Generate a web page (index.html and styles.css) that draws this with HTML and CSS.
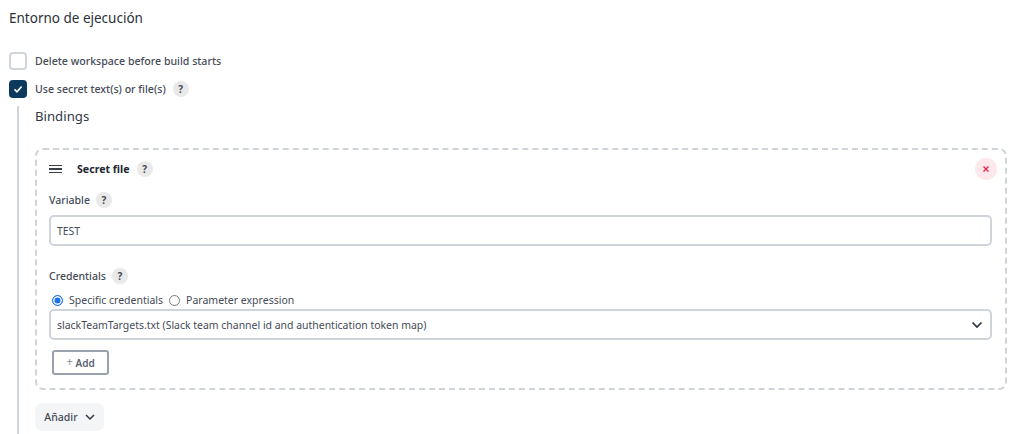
FILE: index.html
```html
<!DOCTYPE html>
<html lang="en">
<head>
  <meta charset="UTF-8">
  <meta name="viewport" content="width=device-width, initial-scale=1.0">
  <link rel="stylesheet" href="styles.css">
  <title>Entorno de ejecución</title>
</head>
<body>
  <h2 class="section-title">Entorno de ejecución</h2>

  <div class="check-row">
    <span class="checkbox"></span>
    <span class="check-label">Delete workspace before build starts</span>
  </div>
  <div class="check-row check-row-second">
    <span class="checkbox checked">
      <svg width="10" height="10" viewBox="0 0 10 10"><path d="M1.5 5.4 L4 7.8 L8.6 2.4" fill="none" stroke="#fff" stroke-width="1.6"/></svg>
    </span>
    <span class="check-label">Use secret text(s) or file(s)</span>
    <span class="help">?</span>
  </div>

  <div class="nested">
    <h3 class="bindings-title">Bindings</h3>

    <div class="card">
      <div class="card-head">
        <span class="drag-handle"><i></i><i></i><i></i></span>
        <span class="card-title">Secret file</span>
        <span class="help">?</span>
        <span class="close-btn">
          <svg width="8" height="8" viewBox="0 0 8 8"><path d="M1.5 1.5 L6.5 6.5 M6.5 1.5 L1.5 6.5" stroke="#e6214a" stroke-width="1.3"/></svg>
        </span>
      </div>

      <div class="field-label">Variable <span class="help">?</span></div>
      <div class="text-input">TEST</div>

      <div class="field-label field-label-creds">Credentials <span class="help">?</span></div>
      <div class="radio-row">
        <span class="radio selected"></span>
        <span class="radio-label">Specific credentials</span>
        <span class="radio"></span>
        <span class="radio-label">Parameter expression</span>
      </div>
      <div class="text-input select-input">
        slackTeamTargets.txt (Slack team channel id and authentication token map)
        <svg class="chevron" width="12" height="8" viewBox="0 0 12 8"><path d="M1.5 1.5 L6 6 L10.5 1.5" fill="none" stroke="#2f3542" stroke-width="1.7"/></svg>
      </div>
      <button class="add-btn"><span class="plus">+</span> Add</button>
    </div>

    <button class="more-btn">Añadir
      <svg width="10" height="7" viewBox="0 0 10 7"><path d="M1 1 L5 5 L9 1" fill="none" stroke="#2f3542" stroke-width="1.5"/></svg>
    </button>
  </div>
</body>
</html>
```

FILE: styles.css
```css
html, body {
  height: 434px;
  overflow: hidden;
}

body {
  margin: 0;
  padding: 9px 0 0 9px;
  box-sizing: border-box;
  font-family: 'Noto Sans', sans-serif;
  font-size: 10.6px;
  color: #333a47;
  background-color: #fff;
}

.section-title {
  margin: 0;
  font-size: 13.5px;
  line-height: 18px;
  font-weight: 400;
  color: #2b303a;
}

.check-row {
  display: flex;
  align-items: center;
  height: 18px;
  margin-top: 25px;
}

.check-row-second {
  margin-top: 10px;
}

.checkbox {
  display: flex;
  align-items: center;
  justify-content: center;
  width: 18px;
  height: 18px;
  box-sizing: border-box;
  border: 2px solid #cfd5db;
  border-radius: 4px;
  margin-right: 8px;
}

.checkbox.checked {
  background-color: #0b3a5c;
  border-color: #0b3a5c;
}

.check-label {
  font-weight: 500;
  color: #454b57;
}

.help {
  display: inline-flex;
  align-items: center;
  justify-content: center;
  width: 16px;
  height: 16px;
  margin-left: 6px;
  border-radius: 50%;
  background-color: #e9e9ea;
  font-size: 10px;
  font-weight: 700;
  color: #444a55;
}

.check-row .help {
  margin-left: 7px;
}

.nested {
  margin: 8px 0 0 8px;
  padding-left: 16px;
  border-left: 2px solid #cfd4da;
  height: 340px;
}

.bindings-title {
  margin: 0;
  padding-top: 1px;
  font-size: 13.2px;
  line-height: 18px;
  font-weight: 400;
  color: #333a47;
}

.card {
  margin-top: 23px;
  width: 972px;
  height: 242px;
  box-sizing: border-box;
  padding: 8px 13px 0 12px;
  border: 2px dashed #cfd4da;
  border-radius: 8px;
}

.card-head {
  display: flex;
  align-items: center;
  height: 22px;
}

.drag-handle {
  display: flex;
  flex-direction: column;
  gap: 2px;
  width: 13px;
  margin-right: 15px;
}

.drag-handle i {
  display: block;
  height: 1.5px;
  background-color: #3a404c;
}

.card-title {
  font-weight: 700;
  color: #23272f;
}

.card-head .help {
  margin-left: 7px;
}

.close-btn {
  display: flex;
  align-items: center;
  justify-content: center;
  width: 22px;
  height: 22px;
  margin-left: auto;
  margin-right: -5px;
  border-radius: 50%;
  background-color: #fde8eb;
}

.field-label {
  display: flex;
  align-items: center;
  height: 16px;
  margin-top: 12px;
  font-weight: 500;
  font-size: 10.5px;
  color: #454b57;
}

.field-label-creds {
  margin-top: 22px;
}

.text-input {
  display: flex;
  align-items: center;
  justify-content: space-between;
  height: 31px;
  box-sizing: border-box;
  margin-top: 7px;
  padding: 0 6px;
  border: 2px solid #cfd4da;
  border-radius: 5px;
  font-size: 10.46px;
  color: #454b57;
}

.radio-row {
  display: flex;
  align-items: center;
  height: 16px;
  margin-top: 8px;
  padding-left: 3px;
  font-size: 10.5px;
}

.radio {
  width: 11px;
  height: 11px;
  box-sizing: border-box;
  border: 1px solid #777;
  border-radius: 50%;
  margin-right: 6px;
}

.radio.selected {
  border: 1.5px solid #1a73e8;
  background: #1a73e8;
  box-shadow: inset 0 0 0 1.5px #fff;
}

.radio-label {
  margin-right: 6px;
  color: #454b57;
}

.select-input {
  height: 31px;
  margin-top: 1px;
}

.chevron {
  margin-right: 1px;
}

.add-btn {
  display: block;
  width: 57px;
  height: 25px;
  margin: 10px 0 0 3px;
  padding: 0;
  background-color: #fff;
  border: 2px solid #98a1ad;
  border-radius: 3px;
  font-family: inherit;
  font-size: 10px;
  font-weight: 600;
  color: #5a6273;
}

.plus {
  font-size: 12px;
  font-weight: 300;
}

.more-btn {
  display: flex;
  align-items: center;
  justify-content: center;
  gap: 7px;
  width: 69px;
  height: 28px;
  margin-top: 13px;
  padding: 0;
  background-color: #f4f5f7;
  border: none;
  border-radius: 7px;
  font-family: inherit;
  font-size: 10.5px;
  font-weight: 500;
  color: #454b57;
}
```
